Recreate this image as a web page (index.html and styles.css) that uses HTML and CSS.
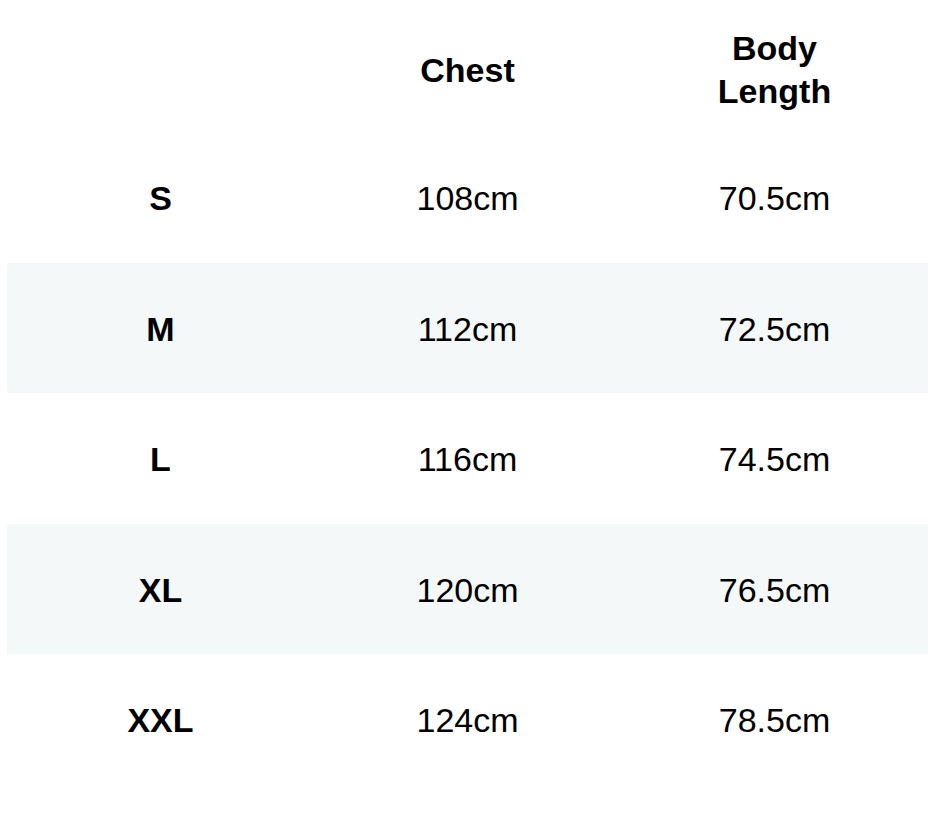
FILE: index.html
```html
<!DOCTYPE html>
<html>
<head>
<meta charset="utf-8">
<link rel="stylesheet" href="styles.css">
</head>
<body>
<div class="chart">
  <div class="row head">
    <div class="cell"></div>
    <div class="cell">Chest</div>
    <div class="cell">Body<br>Length</div>
  </div>
  <div class="row tall">
    <div class="cell size">S</div>
    <div class="cell">108cm</div>
    <div class="cell">70.5cm</div>
  </div>
  <div class="row short stripe">
    <div class="cell size">M</div>
    <div class="cell">112cm</div>
    <div class="cell">72.5cm</div>
  </div>
  <div class="row tall">
    <div class="cell size">L</div>
    <div class="cell">116cm</div>
    <div class="cell">74.5cm</div>
  </div>
  <div class="row short stripe">
    <div class="cell size">XL</div>
    <div class="cell">120cm</div>
    <div class="cell">76.5cm</div>
  </div>
  <div class="row tall">
    <div class="cell size">XXL</div>
    <div class="cell">124cm</div>
    <div class="cell">78.5cm</div>
  </div>
</div>
</body>
</html>
```
FILE: styles.css
```css
html, body {
  margin: 0;
  padding: 0;
  background: #fff;
}
body {
  font-family: "Liberation Sans", Arial, sans-serif;
  color: #000;
  font-size: 34px;
  line-height: 43px;
}
.chart {
  margin: 8px 6px 0 7px;
  width: 921px;
}
.row {
  display: grid;
  grid-template-columns: 1fr 1fr 1fr;
  align-items: center;
}
.head {
  height: 124px;
  font-weight: bold;
}
.tall { height: 131px; }
.short { height: 130px; }
.stripe { background: #f5f8f9; }
.cell {
  text-align: center;
  padding-top: 2px;
}
.head .cell {
  padding-top: 0;
}
.size {
  font-weight: bold;
}
```
